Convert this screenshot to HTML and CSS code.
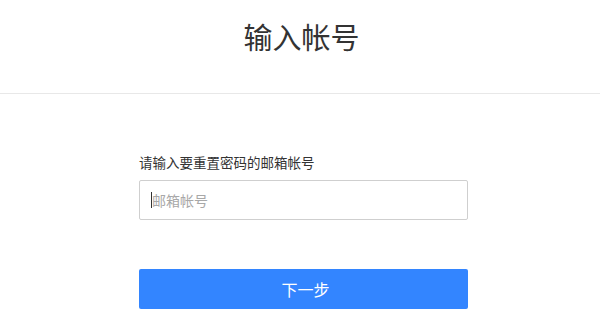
FILE: index.html
```html
<!DOCTYPE html>
<html lang="zh-CN">
<head>
<meta charset="utf-8">
<title>输入帐号</title>
<link rel="stylesheet" href="styles.css">
</head>
<body>
<header class="header">
  <h1 class="title">输入帐号</h1>
</header>
<main class="form">
  <label class="label" for="email">请输入要重置密码的邮箱帐号</label>
  <div class="input-box">
    <span class="caret"></span>
    <span class="placeholder">邮箱帐号</span>
  </div>
  <button class="btn" type="button">下一步</button>
</main>
</body>
</html>
```
FILE: styles.css
```css
html, body {
  margin: 0;
  padding: 0;
  background: #fff;
}
body {
  font-family: "Noto Sans CJK SC", "Noto Sans", sans-serif;
  color: #333;
}
.header {
  height: 93px;
  border-bottom: 1px solid #e8e8e8;
  box-sizing: content-box;
  display: flex;
  justify-content: center;
  padding-left: 3px;
}
.title {
  margin: 17px 0 0;
  font-size: 29px;
  line-height: 38px;
  font-weight: 400;
  color: #333;
}
.form {
  margin-left: 139px;
  width: 329px;
  padding-top: 60px;
  display: flex;
  flex-direction: column;
}
.label {
  font-size: 13.5px;
  line-height: 16px;
  color: #333;
  height: 16px;
}
.input-box {
  margin-top: 10px;
  height: 40px;
  box-sizing: border-box;
  border: 1px solid #cfcfcf;
  border-radius: 2px;
  display: flex;
  align-items: center;
  padding-left: 11px;
}
.caret {
  width: 1px;
  height: 16px;
  background: #333;
  margin-right: 0;
}
.placeholder {
  font-size: 14px;
  color: #a8a8a8;
  line-height: 16px;
}
.btn {
  margin-top: 49px;
  height: 40px;
  border: none;
  border-radius: 2px;
  background: #3385ff;
  color: #fff;
  font-family: "Noto Sans CJK SC", "Noto Sans", sans-serif;
  font-size: 16px;
  padding: 0;
  padding-left: 4px;
}
```
